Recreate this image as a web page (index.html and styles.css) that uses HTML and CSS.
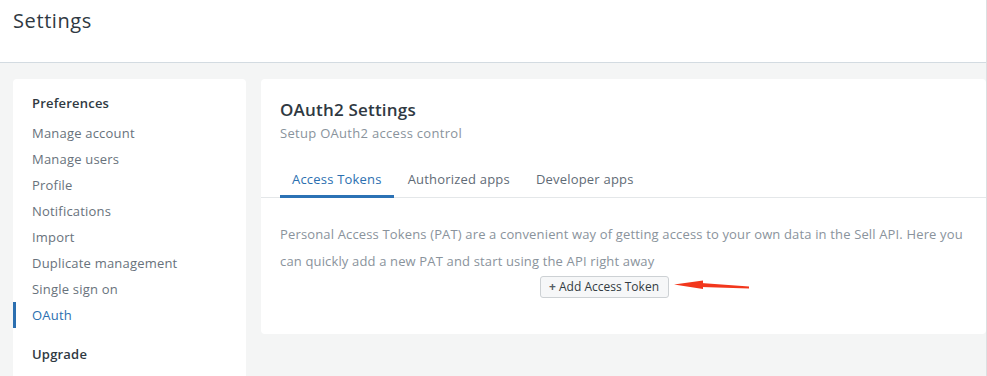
FILE: index.html
```html
<!DOCTYPE html>
<html lang="en">
<head>
    <meta charset="UTF-8">
    <title>Settings</title>
    <link rel="stylesheet" href="styles.css">
</head>
<body>
    <div class="page">
        <header class="topbar">
            <h1>Settings</h1>
        </header>

        <div class="layout">
            <nav class="sidebar">
                <h4>Preferences</h4>
                <ul>
                    <li>Manage account</li>
                    <li>Manage users</li>
                    <li>Profile</li>
                    <li>Notifications</li>
                    <li>Import</li>
                    <li>Duplicate management</li>
                    <li>Single sign on</li>
                    <li class="active">OAuth</li>
                </ul>
                <h4 class="spaced">Upgrade</h4>
            </nav>

            <section class="card">
                <div class="card-head">
                    <h2>OAuth2 Settings</h2>
                    <p class="sub">Setup OAuth2 access control</p>
                </div>
                <div class="tabs">
                    <span class="tab active">Access Tokens</span>
                    <span class="tab">Authorized apps</span>
                    <span class="tab">Developer apps</span>
                </div>
                <div class="card-body">
                    <p class="intro">Personal Access Tokens (PAT) are a convenient way of getting access to your own data in the Sell API. Here you can quickly add a new PAT and start using the API right away</p>
                    <div class="actions">
                        <button class="btn"><span class="plus">+</span> Add Access Token</button>
                        <!-- annotation arrow -->
                        <svg class="arrow" width="80" height="14" viewBox="0 0 80 14">
                            <path d="M28 4 L76 7.5 L76 9.5 L28 8 Z" fill="#f2371c"/>
                            <path d="M1 5.5 L30 1.5 L30 10 Z" fill="#f2371c"/>
                        </svg>
                    </div>
                </div>
            </section>
        </div>
    </div>
</body>
</html>
```

FILE: styles.css
```css
body {
    margin: 0;
    font-family: 'Open Sans', sans-serif;
    background-color: #f4f5f5;
    color: #2f3942;
    letter-spacing: 0.2px;
}
.page {
    width: 986px;
    height: 376px;
    border-right: 1px solid #dcdfe1;
    overflow: hidden;
}
.topbar {
    background-color: #fff;
    height: 62px;
    border-bottom: 1px solid #d3dbe1;
    padding-left: 13px;
}
.topbar h1 {
    margin: 0;
    padding-top: 7px;
    font-size: 20px;
    font-weight: 400;
    line-height: 28px;
    letter-spacing: 0.6px;
    color: #2f3942;
}
.layout {
    display: flex;
    gap: 15px;
    padding: 16px 0 0 13px;
}
.sidebar {
    width: 233px;
    height: 320px;
    background-color: #fff;
    border-radius: 4px;
    padding-top: 11px;
    flex-shrink: 0;
}
.sidebar h4 {
    margin: 0 0 4px;
    padding-left: 19px;
    font-size: 13px;
    font-weight: 600;
    line-height: 26px;
    color: #2f3942;
}
.sidebar h4.spaced {
    margin-top: 13px;
}
.sidebar ul {
    list-style: none;
    margin: 0;
    padding: 0;
}
.sidebar li {
    padding-left: 19px;
    font-size: 13px;
    line-height: 26px;
    color: #68727c;
}
.sidebar li.active {
    color: #2b6fb0;
    box-shadow: inset 3px 0 0 #2b6fb0;
}
.card {
    flex: 1;
    background-color: #fff;
    border-radius: 4px;
    height: 255px;
}
.card-head {
    padding: 20px 19px 0;
}
.card-head h2 {
    margin: 0;
    font-size: 17px;
    font-weight: 600;
    line-height: 22px;
    color: #2f3942;
}
.sub {
    margin: 2px 0 0;
    font-size: 13px;
    line-height: 20px;
    letter-spacing: 0.3px;
    color: #89939c;
}
.tabs {
    display: flex;
    gap: 2px;
    margin-top: 26px;
    padding: 0 19px;
    border-bottom: 1px solid #e4e7e9;
}
.tab {
    padding: 0 12px 6px;
    font-size: 13px;
    line-height: 20px;
    color: #5f6b76;
    border-bottom: 3px solid transparent;
    margin-bottom: -1px;
}
.tab.active {
    color: #2b6fb0;
    border-bottom-color: #2b72b5;
}
.card-body {
    padding: 23px 17px 0 19px;
}
.intro {
    margin: 0;
    font-size: 13px;
    line-height: 27px;
    letter-spacing: 0.15px;
    color: #8a939c;
}
.actions {
    position: relative;
    margin: -1px 0 0 260px;
}
.btn {
    height: 22px;
    padding: 0 9px 0 8px;
    font-family: inherit;
    font-size: 12px;
    letter-spacing: 0;
    color: #333b42;
    background-color: #f6f7f8;
    border: 1px solid #cdd1d4;
    border-radius: 3px;
}
.plus {
    font-weight: 700;
    color: #555d64;
}
.arrow {
    position: absolute;
    left: 133px;
    top: 5px;
}
```
